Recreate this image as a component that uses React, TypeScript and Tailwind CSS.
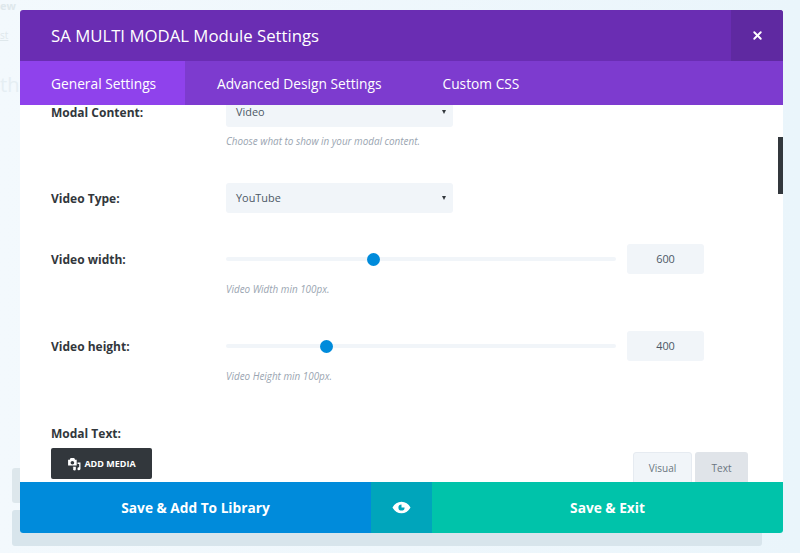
import { X } from "lucide-react";

function Hint({ text, className }: { text: string; className: string }) {
    return <p className={`${className} text-[9.9px] leading-[16px] italic text-[#9aa5b1]`}>{text}</p>;
}

function SelectBox({ value }: { value: string }) {
    return (
        <div className="flex h-[30px] w-[227px] items-center justify-between rounded-[3px] bg-[#f1f5f9] pl-[10px] pr-[7px] text-[10.9px] text-[#4c5866]">
            <span>{value}</span>
            <span className="h-0 w-0 border-x-[2.5px] border-t-[4px] border-x-transparent border-t-[#32373c]" />
        </div>
    );
}

function Label({ text }: { text: string }) {
    return <div className="w-[175px] pt-[1px] text-[12px] font-bold leading-[30px] text-[#32373c]">{text}</div>;
}

function SliderRow({ label, value, percent, hint, className }: { label: string; value: string; percent: number; hint: string; className: string }) {
    return (
        <div className={`flex ${className}`}>
            <Label text={label} />
            <div>
                <div className="flex items-center">
                    <div className="relative h-[4px] w-[390px] rounded-full bg-[#f1f5f9]">
                        <span className="absolute top-[-4.5px] ml-[-6.5px] h-[13px] w-[13px] rounded-full bg-[#008bdb]" style={{ left: `${percent}%` }} />
                    </div>
                    <div className="ml-[11px] flex h-[30px] w-[77px] items-center justify-center rounded-[3px] bg-[#f1f5f9] text-[10.9px] text-[#4c5866]">{value}</div>
                </div>
                <Hint className="mt-[7px]" text={hint} />
            </div>
        </div>
    );
}

export default function App() {
    return (
        <div className="relative h-[553px] w-[800px] overflow-hidden bg-gradient-to-r from-[#f3f9fd] to-[#eaf5fb] font-['Open_Sans',sans-serif]">
            {/* washed out page behind the modal */}
            <span className="absolute left-0 top-0 text-[11px] leading-[11px] font-bold text-[#dfe8ec]">ew</span>
            <span className="absolute left-0 top-[28px] text-[10px] text-[#dfe8ec] underline">st</span>
            <span className="absolute left-0 top-[70px] text-[20px] text-[#e5eef3]">th</span>
            <div className="absolute left-[12px] top-[468px] h-[35px] w-[30px] rounded-[3px] bg-[#dde7ec]" />
            <div className="absolute left-[12px] top-[510px] h-[36px] w-[750px] rounded-[3px] bg-[#d8e5ec]" />

            <div className="relative ml-[20px] flex h-[523px] w-[763px] translate-y-[10px] flex-col overflow-hidden rounded-[3px] bg-white">
                <div className="flex h-[51px] shrink-0 bg-[#6a2db3] text-white">
                    <div className="flex-1 pl-[31px] text-[16.75px] leading-[51px]">SA MULTI MODAL Module Settings</div>
                    <div className="flex w-[52px] items-center justify-center bg-[#5f29a1]">
                        <X size={13} strokeWidth={3.5} />
                    </div>
                </div>
                <div className="flex h-[44px] shrink-0 bg-[#7d3bcf] text-[13.75px] leading-[45px] text-white">
                    <div className="w-[165px] bg-[#8f42ec] pl-[31px]">General Settings</div>
                    <div className="pl-[32px]">Advanced Design Settings</div>
                    <div className="pl-[61px]">Custom CSS</div>
                </div>

                <div className="relative min-h-0 flex-1 overflow-hidden">
                    <span className="absolute right-0 top-[32px] h-[57px] w-[5px] bg-[#32373c]" />
                    <div className="mt-[-8px] pl-[31px]">
                        <div className="flex">
                            <Label text="Modal Content:" />
                            <div>
                                <SelectBox value="Video" />
                                <Hint className="mt-[6px]" text="Choose what to show in your modal content." />
                            </div>
                        </div>
                        <div className="mt-[34px] flex">
                            <Label text="Video Type:" />
                            <SelectBox value="YouTube" />
                        </div>
                        <SliderRow className="mt-[30px]" label="Video width:" value="600" percent={37.9} hint="Video Width min 100px." />
                        <SliderRow className="mt-[34px]" label="Video height:" value="400" percent={25.7} hint="Video Height min 100px." />
                        <div className="mt-[41px] text-[12px] font-bold leading-[18px] text-[#32373c]">Modal Text:</div>
                        <div className="mt-[5px] flex w-[697px] items-start justify-between">
                            <div className="flex h-[31px] w-[101px] items-center justify-center gap-[3px] rounded-[2px] bg-[#32373c] text-[9px] font-bold text-white">
                                <svg width="14" height="14" viewBox="0 0 13 13" fill="white">
                                    <path d="M1 2.5h1.5L3.3 1h3.4l.8 1.5H9v5.5H1zM5 3.6a1.7 1.7 0 1 0 0 3.4 1.7 1.7 0 0 0 0-3.4z" fillRule="evenodd" />
                                    <path d="M9.8 5H12.5v6a1.4 1.4 0 1 1-1.2-1.4V6.4h-1.5zM5.5 9h2.7v2.3a1.3 1.3 0 1 1-1.1-1.3v-.1H5.5z" />
                                </svg>
                                ADD MEDIA
                            </div>
                            <div className="mt-[4px] flex gap-[3px] text-[10px]">
                                <div className="flex h-[31px] w-[59px] items-center justify-center rounded-t-[3px] border border-[#e6ebf1] bg-[#f1f5f9] pt-[1px] text-[#6a7580]">Visual</div>
                                <div className="flex h-[31px] w-[53px] items-center justify-center rounded-t-[3px] bg-[#e0e4e9] pt-[1px] text-[#6a7580]">Text</div>
                            </div>
                        </div>
                    </div>
                </div>

                <div className="relative flex h-[51px] shrink-0 text-[13.7px] font-bold leading-[52px] text-white">
                    <div className="w-[351px] bg-[#008bdb] text-center">Save &amp; Add To Library</div>
                    <div className="flex w-[61px] items-center justify-center bg-[#00a5bb]">
                        <svg width="19" height="13" viewBox="0 0 19 13" fill="white">
                            <path fillRule="evenodd" d="M0.5 6.5C2.5 2.8 5.7 0.7 9.5 0.7s7 2.1 9 5.8c-2 3.7-5.2 5.8-9 5.8s-7-2.1-9-5.8zM9.5 3.4a3.1 3.1 0 1 0 3.1 3.1H9.5z" />
                        </svg>
                    </div>
                    <div className="flex-1 bg-[#00c3aa] text-center">Save &amp; Exit</div>
                </div>
            </div>
        </div>
    );
}
